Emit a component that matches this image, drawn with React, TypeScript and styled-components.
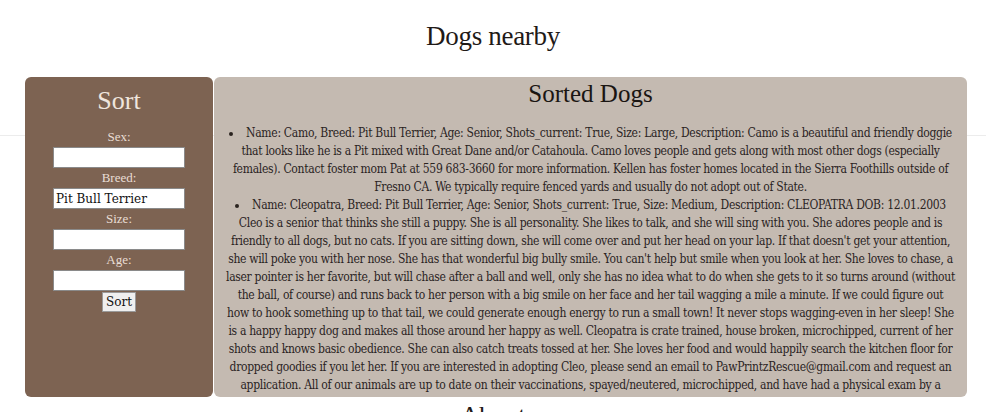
import React from "react";
import styled, { createGlobalStyle } from "styled-components";

const Global = createGlobalStyle`
  html, body { margin: 0; padding: 0; background: #fff; }
  body { font-family: "Liberation Serif", "DejaVu Serif", serif; color: #1f1a17; }
`;

const Page = styled.div`
  width: 986px;
  height: 412px;
  overflow: hidden;
`;

const Header = styled.header`
  height: 77px;
  box-sizing: border-box;
  padding-top: 21px;
  text-align: center;
`;

const Title = styled.h1`
  margin: 0;
  font-size: 27px;
  line-height: 30px;
  font-weight: normal;
  letter-spacing: -0.3px;
`;

const Band = styled.div`
  background: linear-gradient(
    to bottom,
    transparent 58px,
    #ececec 58px,
    #ececec 59px,
    transparent 59px
  );
`;

const Row = styled.div`
  display: flex;
  gap: 1px;
  margin: 0 19px 0 25px;
  height: 320px;
`;

const Sidebar = styled.aside`
  width: 188px;
  flex: none;
  background: #7d6352;
  border-radius: 6px;
  display: flex;
  flex-direction: column;
  align-items: center;
`;

const SideTitle = styled.h2`
  margin: 0;
  height: 50px;
  box-sizing: border-box;
  padding-top: 9px;
  font-size: 26px;
  line-height: 30px;
  font-weight: normal;
  color: #efe5dd;
`;

const Label = styled.label`
  display: block;
  height: 20px;
  line-height: 20px;
  font-size: 13px;
  color: #e9ded5;
  text-align: center;
`;

const Input = styled.input`
  width: 132px;
  height: 21px;
  box-sizing: border-box;
  border: 1px solid #8a8a8a;
  background: #fff;
  padding: 0 2px;
  font-family: "DejaVu Serif", serif;
  font-size: 12px;
  color: #111;
  outline: none;
`;

const Button = styled.button`
  margin-top: 1px;
  width: 34px;
  height: 20px;
  box-sizing: border-box;
  padding: 0;
  border: 1px solid #9a9a9a;
  background: #efefef;
  font-family: "DejaVu Serif", serif;
  font-size: 12px;
  color: #111;
`;

const Main = styled.main`
  flex: 1;
  background: #c4bab1;
  border-radius: 6px;
  overflow: hidden;
  padding: 0 12px;
  text-align: center;
`;

const MainTitle = styled.h2`
  margin: 0;
  height: 47px;
  box-sizing: border-box;
  padding-top: 1px;
  font-size: 25px;
  line-height: 32px;
  font-weight: normal;
  color: #1a1512;
`;

const List = styled.ul`
  margin: 0;
  padding: 0;
  list-style: disc inside;
`;

const Item = styled.li`
  font-family: "DejaVu Serif Condensed", "DejaVu Serif", serif;
  font-stretch: condensed;
  font-size: 12px;
  letter-spacing: -0.3px;
  line-height: 18px;
  color: #2a231f;
`;

const About = styled.h2`
  margin: 4px 0 0;
  text-align: center;
  font-size: 26px;
  font-weight: normal;
`;

const dogs = [
  "Name: Camo, Breed: Pit Bull Terrier, Age: Senior, Shots_current: True, Size: Large, Description: Camo is a beautiful and friendly doggie that looks like he is a Pit mixed with Great Dane and/or Catahoula. Camo loves people and gets along with most other dogs (especially females). Contact foster mom Pat at 559 683-3660 for more information. Kellen has foster homes located in the Sierra Foothills outside of Fresno CA. We typically require fenced yards and usually do not adopt out of State.",
  "Name: Cleopatra, Breed: Pit Bull Terrier, Age: Senior, Shots_current: True, Size: Medium, Description: CLEOPATRA DOB: 12.01.2003 Cleo is a senior that thinks she still a puppy. She is all personality. She likes to talk, and she will sing with you. She adores people and is friendly to all dogs, but no cats. If you are sitting down, she will come over and put her head on your lap. If that doesn't get your attention, she will poke you with her nose. She has that wonderful big bully smile. You can't help but smile when you look at her. She loves to chase, a laser pointer is her favorite, but will chase after a ball and well, only she has no idea what to do when she gets to it so turns around (without the ball, of course) and runs back to her person with a big smile on her face and her tail wagging a mile a minute. If we could figure out how to hook something up to that tail, we could generate enough energy to run a small town! It never stops wagging-even in her sleep! She is a happy happy dog and makes all those around her happy as well. Cleopatra is crate trained, house broken, microchipped, current of her shots and knows basic obedience. She can also catch treats tossed at her. She loves her food and would happily search the kitchen floor for dropped goodies if you let her. If you are interested in adopting Cleo, please send an email to PawPrintzRescue@gmail.com and request an application. All of our animals are up to date on their vaccinations, spayed/neutered, microchipped, and have had a physical exam by a veterinarian.",
];

export default function App() {
  return (
    <Page>
      <Global />
      <Header>
        <Title>Dogs nearby</Title>
      </Header>
      <Band>
        <Row>
          <Sidebar>
            <SideTitle>Sort</SideTitle>
            <Label>Sex:</Label>
            <Input defaultValue="" />
            <Label>Breed:</Label>
            <Input defaultValue="Pit Bull Terrier" />
            <Label>Size:</Label>
            <Input defaultValue="" />
            <Label>Age:</Label>
            <Input defaultValue="" />
            <Button>Sort</Button>
          </Sidebar>
          <Main>
            <MainTitle>Sorted Dogs</MainTitle>
            <List>
              {dogs.map((d) => (
                <Item key={d.slice(0, 20)}>{d}</Item>
              ))}
            </List>
          </Main>
        </Row>
      </Band>
      <About>About</About>
    </Page>
  );
}
